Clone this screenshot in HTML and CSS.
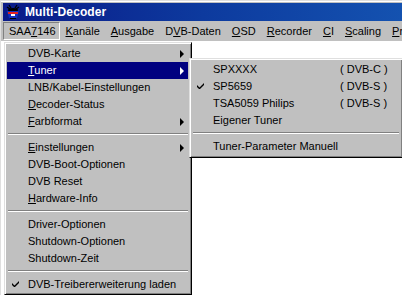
FILE: index.html
```html
<!DOCTYPE html>
<html>
<head>
<meta charset="utf-8">
<link rel="stylesheet" href="styles.css">
</head>
<body>
<div class="window">
  <div class="titlebar">
    <svg class="appicon" width="16" height="16" viewBox="0 0 16 16">
      <path d="M4 1 L6 4 M12 1 L10 4 M2 3 L5 5 M14 3 L11 5" stroke="#000" stroke-width="1.3"/>
      <ellipse cx="8" cy="6" rx="5" ry="2" fill="#000"/>
      <path d="M2 7 H14 L12 14 H4 Z" fill="#1030c0"/>
      <rect x="3" y="8" width="10" height="2" fill="#e02020"/>
      <rect x="6" y="10" width="4" height="2" fill="#ffffff"/>
      <rect x="5" y="14" width="6" height="1" fill="#000"/>
    </svg>
    <span class="title">Multi-Decoder</span>
  </div>
  <div class="menubar">
    <span class="mitem pressed">SAA<u>7</u>146</span>
    <span class="mitem"><u>K</u>anäle</span>
    <span class="mitem"><u>A</u>usgabe</span>
    <span class="mitem">D<u>V</u>B-Daten</span>
    <span class="mitem"><u>O</u>SD</span>
    <span class="mitem"><u>R</u>ecorder</span>
    <span class="mitem"><u>C</u>I</span>
    <span class="mitem"><u>S</u>caling</span>
    <span class="mitem"><u>P</u>ri</span>
  </div>
  <div class="client"></div>

  <div class="menu dropdown">
    <div class="item"><span class="label">DVB-Karte</span><span class="arrow"></span></div>
    <div class="item active"><span class="label"><u>T</u>uner</span><span class="arrow"></span></div>
    <div class="item"><span class="label">LNB/Kabel-Einstellungen</span></div>
    <div class="item"><span class="label"><u>D</u>ecoder-Status</span></div>
    <div class="item"><span class="label"><u>F</u>arbformat</span><span class="arrow"></span></div>
    <div class="sep"></div>
    <div class="item"><span class="label"><u>E</u>instellungen</span><span class="arrow"></span></div>
    <div class="item"><span class="label">DVB-Boot-Optionen</span></div>
    <div class="item"><span class="label">DVB Reset</span></div>
    <div class="item"><span class="label"><u>H</u>ardware-Info</span></div>
    <div class="sep"></div>
    <div class="item"><span class="label">Driver-Optionen</span></div>
    <div class="item"><span class="label">Shutdown-Optionen</span></div>
    <div class="item"><span class="label">Shutdown-Zeit</span></div>
    <div class="sep"></div>
    <div class="item"><span class="check"><svg width="7" height="7" viewBox="0 0 7 7"><path d="M0 2 L0 4 L2 6 L3 6 L7 2 L7 0 L2.5 4.5 Z" fill="#000"/></svg></span><span class="label">DVB-Treibererweiterung laden</span></div>
  </div>

  <div class="menu submenu">
    <div class="item"><span class="name">SPXXXX</span><span class="tag">( DVB-C )</span></div>
    <div class="item"><span class="check"><svg width="7" height="7" viewBox="0 0 7 7"><path d="M0 2 L0 4 L2 6 L3 6 L7 2 L7 0 L2.5 4.5 Z" fill="#000"/></svg></span><span class="name">SP5659</span><span class="tag">( DVB-S )</span></div>
    <div class="item"><span class="name">TSA5059 Philips</span><span class="tag">( DVB-S )</span></div>
    <div class="item"><span class="name">Eigener Tuner</span></div>
    <div class="sep"></div>
    <div class="item"><span class="name">Tuner-Parameter Manuell</span></div>
  </div>
</div>
</body>
</html>
```

FILE: styles.css
```css
* { box-sizing: border-box; }
html, body { margin: 0; padding: 0; }
body {
  width: 402px;
  height: 295px;
  overflow: hidden;
  font-family: "Liberation Sans", Arial, sans-serif;
  font-size: 11px;
  color: #000;
}
u { text-decoration: underline; text-underline-offset: 1px; }

.window {
  position: relative;
  width: 402px;
  height: 295px;
  background: #c0c0c0;
  border-top: 1px solid #dfdfdf;
  border-left: 1px solid #dfdfdf;
  padding: 2px 0 0 2px;
  display: flex;
  flex-direction: column;
}
.window::before {
  content: "";
  position: absolute;
  left: 0; top: 0; right: 0; height: 1px;
  background: #ffffff;
}

.titlebar {
  height: 18px;
  flex: none;
  background: linear-gradient(to right, #0a1a88 0%, #0d3a9e 50%, #1452b0 100%);
  display: flex;
  align-items: center;
  padding-left: 2px;
  gap: 4px;
}
.appicon { flex: none; }
.title {
  color: #fff;
  font-weight: bold;
  font-size: 12px;
  letter-spacing: 0.1px;
}

.menubar {
  height: 20px;
  flex: none;
  display: flex;
  align-items: center;
  padding-left: 0;
  white-space: nowrap;
  overflow: hidden;
}
.mitem {
  flex: none;
  padding: 0 5px 0 6px;
  height: 18px;
  line-height: 18px;
}
.mitem.pressed {
  border: 1px solid;
  border-color: #808080 #ffffff #ffffff #808080;
  line-height: 16px;
  padding-left: 5px;
  padding-right: 3px;
  margin-right: 0;
}

.client {
  flex: 1;
  background: #ffffff;
  margin-left: -2px;
}

.menu {
  position: absolute;
  background: #c0c0c0;
  border: 1px solid;
  border-color: #dfdfdf #000000 #000000 #dfdfdf;
  box-shadow: inset 1px 1px 0 #ffffff, inset -1px -1px 0 #808080;
  padding: 2px 3px 2px 2px;
}
.dropdown {
  left: 3px;
  top: 41px;
  width: 188px;
  height: 253px;
}
.submenu {
  left: 188px;
  top: 57px;
  width: 214px;
  height: 100px;
}
.item {
  position: relative;
  height: 17px;
  line-height: 17px;
  padding-left: 21px;
  white-space: nowrap;
  display: flex;
  align-items: center;
}
.item.active { background: #000080; color: #fff; }
.check {
  position: absolute;
  left: 5px;
  top: 5px;
  width: 7px;
  height: 7px;
  display: block;
}
.check svg { display: block; }
.arrow {
  position: absolute;
  right: 4px;
  top: 5px;
  width: 0; height: 0;
  border-top: 4px solid transparent;
  border-bottom: 4px solid transparent;
  border-left: 4px solid #000;
}
.item.active .arrow { border-left-color: #fff; }
.sep {
  height: 9px;
  position: relative;
}
.sep::before {
  content: "";
  position: absolute;
  left: 1px; right: 0;
  top: 3px;
  height: 1px;
  background: #808080;
  box-shadow: 0 1px 0 #ffffff;
}
.name { width: 127px; flex: none; }
.tag { flex: none; }
```
